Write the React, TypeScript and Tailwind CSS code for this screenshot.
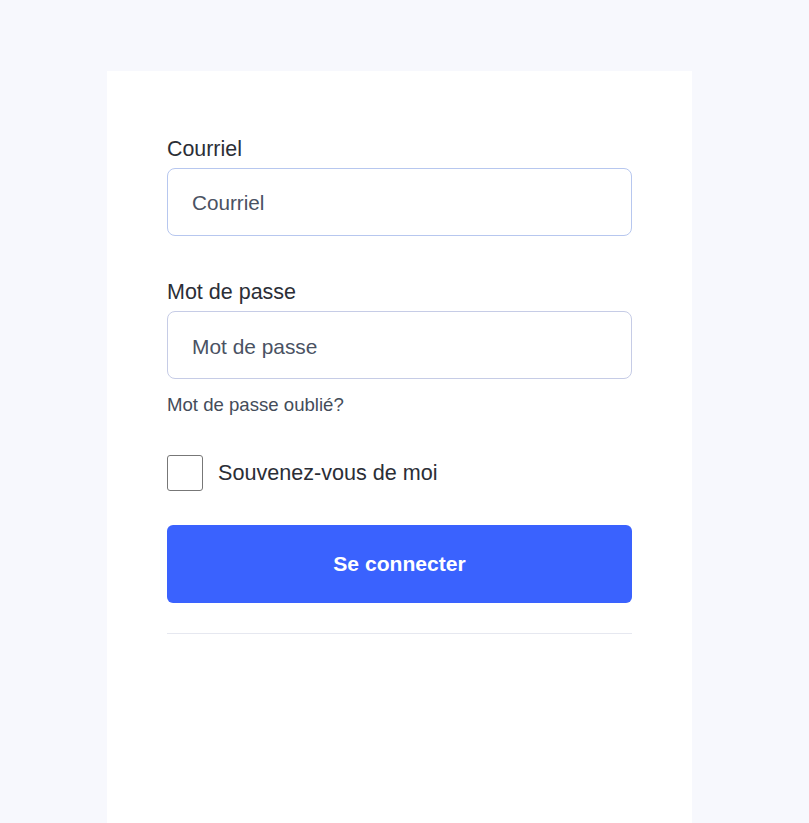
import { useState } from 'react';

export default function App() {
  const [remember, setRemember] = useState(false);

  return (
    <div className="min-h-[823px] bg-[#f7f8fd] flex pl-[107px] pt-[71px] font-['Liberation_Sans',Arial,sans-serif]">
      <div className="w-[585px] min-h-[752px] bg-white px-[60px] pt-[66px]">
        <form className="flex flex-col">
          {/* Email */}
          <label className="text-[21.4px] leading-[24px] text-[#2b2e36] mb-[7px]">Courriel</label>
          <input
            type="email"
            placeholder="Courriel"
            className="h-[68px] rounded-[8px] border border-[#b7c7ef] pl-[24px] pr-[25px] pt-[2px] text-[20.7px] text-[#4a5263] placeholder:text-[#4a5263] outline-none"
          />

          {/* Password */}
          <label className="mt-[44px] text-[21.5px] leading-[24px] text-[#2b2e36] mb-[7px]">Mot de passe</label>
          <input
            type="password"
            placeholder="Mot de passe"
            className="h-[68px] rounded-[8px] border border-[#c6cce6] pl-[24px] pr-[25px] pt-[3px] text-[20.9px] text-[#4a5263] placeholder:text-[#4a5263] outline-none"
          />
          <a href="#" className="mt-[15px] text-[18.6px] leading-[22px] text-[#444c5a] self-start">
            Mot de passe oublié?
          </a>

          {/* Remember me */}
          <label className="mt-[39px] flex items-center gap-[15px] cursor-pointer self-start">
            <span
              onClick={() => setRemember(!remember)}
              className="w-[36px] h-[36px] rounded-[3px] border border-[#777] bg-white flex items-center justify-center"
            >
              {remember && (
                <svg width="20" height="20" viewBox="0 0 24 24" fill="none" stroke="#3a62fe" strokeWidth="3">
                  <path d="M5 12l5 5 9-10" />
                </svg>
              )}
            </span>
            <span className="text-[21.6px] leading-[24px] text-[#2b2e36]">Souvenez-vous de moi</span>
          </label>

          <button
            type="button"
            className="mt-[34px] h-[78px] rounded-[6px] bg-[#3a62fe] text-white text-[21.1px] font-bold"
          >
            Se connecter
          </button>

          <div className="mt-[30px] h-px bg-[#e6e8f0]" />
        </form>
      </div>
    </div>
  );
}
